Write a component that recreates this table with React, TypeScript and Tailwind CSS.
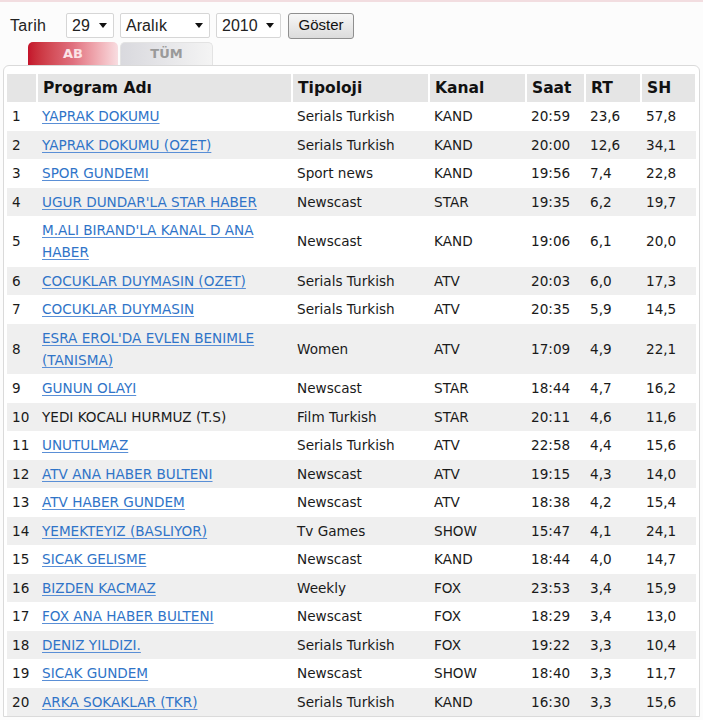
import React from "react";

type Row = [string, string, string, string, string, string, string, boolean];

const rows: Row[] = [
  ["1", "YAPRAK DOKUMU", "Serials Turkish", "KAND", "20:59", "23,6", "57,8", true],
  ["2", "YAPRAK DOKUMU (OZET)", "Serials Turkish", "KAND", "20:00", "12,6", "34,1", true],
  ["3", "SPOR GUNDEMI", "Sport news", "KAND", "19:56", "7,4", "22,8", true],
  ["4", "UGUR DUNDAR'LA STAR HABER", "Newscast", "STAR", "19:35", "6,2", "19,7", true],
  ["5", "M.ALI BIRAND'LA KANAL D ANA HABER", "Newscast", "KAND", "19:06", "6,1", "20,0", true],
  ["6", "COCUKLAR DUYMASIN (OZET)", "Serials Turkish", "ATV", "20:03", "6,0", "17,3", true],
  ["7", "COCUKLAR DUYMASIN", "Serials Turkish", "ATV", "20:35", "5,9", "14,5", true],
  ["8", "ESRA EROL'DA EVLEN BENIMLE (TANISMA)", "Women", "ATV", "17:09", "4,9", "22,1", true],
  ["9", "GUNUN OLAYI", "Newscast", "STAR", "18:44", "4,7", "16,2", true],
  ["10", "YEDI KOCALI HURMUZ (T.S)", "Film Turkish", "STAR", "20:11", "4,6", "11,6", false],
  ["11", "UNUTULMAZ", "Serials Turkish", "ATV", "22:58", "4,4", "15,6", true],
  ["12", "ATV ANA HABER BULTENI", "Newscast", "ATV", "19:15", "4,3", "14,0", true],
  ["13", "ATV HABER GUNDEM", "Newscast", "ATV", "18:38", "4,2", "15,4", true],
  ["14", "YEMEKTEYIZ (BASLIYOR)", "Tv Games", "SHOW", "15:47", "4,1", "24,1", true],
  ["15", "SICAK GELISME", "Newscast", "KAND", "18:44", "4,0", "14,7", true],
  ["16", "BIZDEN KACMAZ", "Weekly", "FOX", "23:53", "3,4", "15,9", true],
  ["17", "FOX ANA HABER BULTENI", "Newscast", "FOX", "18:29", "3,4", "13,0", true],
  ["18", "DENIZ YILDIZI.", "Serials Turkish", "FOX", "19:22", "3,3", "10,4", true],
  ["19", "SICAK GUNDEM", "Newscast", "SHOW", "18:40", "3,3", "11,7", true],
  ["20", "ARKA SOKAKLAR (TKR)", "Serials Turkish", "KAND", "16:30", "3,3", "15,6", true],
];

function Caret() {
  return (
    <svg width="8" height="5" viewBox="0 0 8 5" className="shrink-0">
      <path d="M0 0 L8 0 L4 5 Z" fill="#111" />
    </svg>
  );
}

function FakeSelect({ w, label }: { w: string; label: string }) {
  return (
    <div
      className={`${w} h-[25px] flex items-center justify-between pl-[5px] pr-[6px] bg-white border border-[#d6d6d6] rounded-[2px] text-[16px] text-[#222]`}
    >
      <span>{label}</span>
      <Caret />
    </div>
  );
}

export default function App() {
  const hd = "py-[3px] pl-[5px] leading-[22px] text-left font-bold text-[15.5px] text-[#111] border-r-2 border-white";
  const td = "py-[3.25px] pl-[5px] leading-[22px] align-middle";
  return (
    <div
      className="w-[703px] h-[720px] overflow-hidden bg-[#fcfcfc] border-t-2 border-[#f2dde0]"
      style={{ fontFamily: '"DejaVu Sans", Verdana, sans-serif' }}
    >
      <div
        className="flex items-center pt-[9px] pl-[10px] h-[38px]"
        style={{ fontFamily: '"Liberation Sans", Arial, sans-serif' }}
      >
        <span className="text-[16px] text-[#222] tracking-[0.3px] w-[56px]">Tarih</span>
        <div className="flex items-center gap-[6px]">
          <FakeSelect w="w-[48px]" label="29" />
          <FakeSelect w="w-[90px]" label="Aralık" />
          <FakeSelect w="w-[65px]" label="2010" />
          <div className="ml-[1px] w-[66px] h-[26px] flex items-center justify-center rounded-[3px] border border-[#8f8f8f] bg-gradient-to-b from-[#f7f7f7] to-[#dcdcdc] text-[15px] text-[#111]">
            Göster
          </div>
        </div>
      </div>
      <div className="flex pl-[28px] gap-[2px] mt-[2px] h-[23px]">
        <div className="w-[90px] h-[23px] rounded-t-[5px] bg-gradient-to-r from-[#c4122a] via-[#e0707f] to-[#f8dde1] flex items-center justify-center text-[#fbe3e7] font-bold text-[13px]">
          AB
        </div>
        <div className="w-[93px] h-[23px] rounded-t-[5px] border border-b-0 border-[#e3e3e3] bg-gradient-to-r from-[#d9d9de] to-[#f4f4f4] flex items-center justify-center text-[#9a9a9a] font-bold text-[13px]">
          TÜM
        </div>
      </div>
      <div className="ml-[3px] w-[697px] border border-[#dadada] rounded-t-[6px] pt-[8px] pl-[3px] pr-[3px] bg-white">
        <table className="table-fixed border-collapse w-[689px] text-[13.6px] text-[#1a1a1a]">
          <colgroup>
            <col className="w-[30px]" />
            <col className="w-[255px]" />
            <col className="w-[137px]" />
            <col className="w-[97px]" />
            <col className="w-[59px]" />
            <col className="w-[56px]" />
            <col className="w-[55px]" />
          </colgroup>
          <thead>
            <tr className="bg-[#e5e5e5]">
              <th className={hd}></th>
              <th className={hd}>Program Adı</th>
              <th className={hd}>Tipoloji</th>
              <th className={hd}>Kanal</th>
              <th className={hd}>Saat</th>
              <th className={hd}>RT</th>
              <th className={`${hd} border-r-0`}>SH</th>
            </tr>
          </thead>
          <tbody>
            {rows.map((r, i) => (
              <tr key={r[0]} className={i % 2 === 1 ? "bg-[#efefef]" : "bg-white"}>
                <td className={`${td} pl-[4px]`}>{r[0]}</td>
                <td className={`${td} pr-[30px]`}>
                  {r[7] ? (
                    <span className="text-[#2f74c8] underline underline-offset-[2px] decoration-[#5a8fd6]">{r[1]}</span>
                  ) : (
                    <span>{r[1]}</span>
                  )}
                </td>
                <td className={`${td} pl-[4px]`}>{r[2]}</td>
                <td className={td}>{r[3]}</td>
                <td className={`${td} pl-[4px]`}>{r[4]}</td>
                <td className={td}>{r[5]}</td>
                <td className={td}>{r[6]}</td>
              </tr>
            ))}
          </tbody>
        </table>
      </div>
    </div>
  );
}
